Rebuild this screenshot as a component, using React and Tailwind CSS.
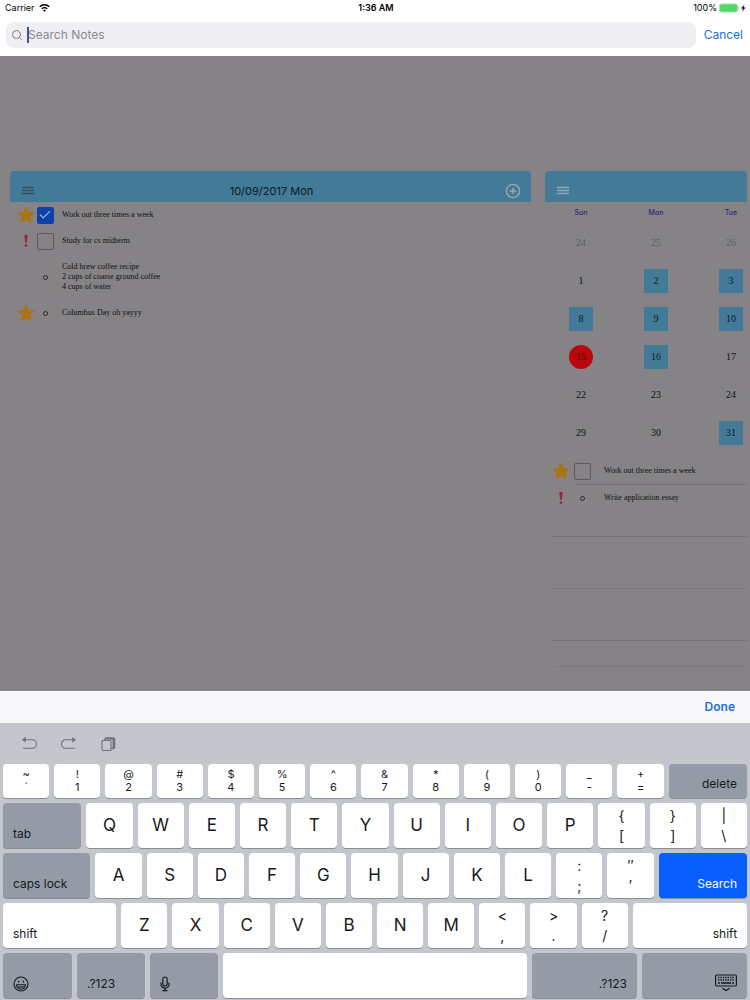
import React, { useState } from "react";
import { Search, CirclePlus, Check } from "lucide-react";

const numberRow = [
  ["~", "`"], ["!", "1"], ["@", "2"], ["#", "3"], ["$", "4"], ["%", "5"], ["^", "6"],
  ["&", "7"], ["*", "8"], ["(", "9"], [")", "0"], ["_", "-"], ["+", "="],
];

const calendarDays = [
  [{ day: 24, type: "muted" }, { day: 25, type: "muted" }, { day: 26, type: "muted" }],
  [{ day: 1 }, { day: 2, type: "marked" }, { day: 3, type: "marked" }],
  [{ day: 8, type: "marked" }, { day: 9, type: "marked" }, { day: 10, type: "marked" }],
  [{ day: 15, type: "today" }, { day: 16, type: "marked" }, { day: 17 }],
  [{ day: 22 }, { day: 23 }, { day: 24 }],
  [{ day: 29 }, { day: 30 }, { day: 31, type: "marked" }],
];

const dayStyles = {
  muted: "text-[#5f5d60]",
  marked: "bg-[#437a98] text-[#0b1c28]",
  today: "bg-[#b9080b] text-[#5c0508] rounded-full",
};

function WifiIcon() {
  return (
    <svg viewBox="0 0 22 16" className="w-[11px] h-2" fill="none" stroke="#000" strokeWidth="3">
      <path d="M1.500 5.500a13.500 13.500 0 0 1 19 0" />
      <path d="M5.500 9.500a8 8 0 0 1 11 0" />
      <path d="M11 15.500l-3-3a4.300 4.300 0 0 1 6 0z" fill="#000" stroke="none" />
    </svg>
  );
}

function MenuIcon() {
  return (
    <svg viewBox="0 0 12 9" className="w-3 h-[9px]" stroke="currentColor" strokeWidth="1.400">
      <path d="M0 1.500h12M0 4.500h12M0 7.500h12" />
    </svg>
  );
}

function Star() {
  return (
    <svg viewBox="0 0 18 18" className="w-[18px] h-[18px]">
      <path
        d="M9 1.500l2.200 5 5.400.6-4 3.700 1.100 5.400L9 13.500l-4.700 2.700 1.100-5.400-4-3.700 5.400-.6z"
        fill="#a8741c"
        stroke="#a8741c"
        strokeWidth="1.500"
        strokeLinejoin="round"
      />
    </svg>
  );
}

function Exclamation() {
  return (
    <svg viewBox="0 0 18 18" className="w-[18px] h-[18px]">
      <path d="M7.300 3.200q1.700-.8 3.400 0l-.9 7.600H8.200z" fill="#9a2140" />
      <circle cx="9" cy="13.600" r="1.400" fill="#9a2140" />
    </svg>
  );
}

function NoteMark({ mark, label, initial }) {
  const [checked, setChecked] = useState(initial);

  if (mark === "bullet") {
    return <span className="w-[5px] h-[5px] rounded-full border border-[#29272a]"></span>;
  }
  return (
    <label className="grid place-items-center">
      <input
        type="checkbox"
        aria-label={label}
        checked={checked}
        onChange={() => setChecked(!checked)}
        className="appearance-none col-start-1 row-start-1 w-[17px] h-[17px] rounded-xs border border-[#5d5b5e] checked:bg-[#0b41ab] checked:border-[#0b41ab]"
      />
      {checked && (
        <Check className="col-start-1 row-start-1 w-3.5 h-3.5 text-[#a3b1cc] pointer-events-none" strokeWidth={2} />
      )}
    </label>
  );
}

function Note({ flag, mark, checked = false, wide = false, lines }) {
  return (
    <li className="flex items-center min-h-[26px]">
      <span className="w-[18px] shrink-0">
        {flag === "star" && <Star />}
        {flag === "alert" && <Exclamation />}
      </span>
      <span className={`${wide ? "w-6 mr-2.5" : "w-5 mr-[7px]"} shrink-0 flex justify-center`}>
        <NoteMark mark={mark} label={lines[0]} initial={checked} />
      </span>
      <p className="font-['Liberation_Serif',serif] text-[8px] leading-[10px] text-[#111012]">
        {lines.map((line) => (
          <span key={line} className="block">{line}</span>
        ))}
      </p>
    </li>
  );
}

function Key({ className, children, ...rest }) {
  return (
    <button
      type="button"
      className={`${className} min-w-0 rounded-[4px] shadow-[0_1px_0_#8b8e93]`}
      {...rest}
    >
      {children}
    </button>
  );
}

function LetterKey({ letter }) {
  return (
    <Key className="flex-[46] bg-white text-[17px] leading-5 pb-0.5">{letter}</Key>
  );
}

function DoubleKey({ top, bottom, small = false }) {
  return (
    <Key className="flex-[46] bg-white">
      <span className={`flex flex-col items-center ${small ? "text-[11px] leading-[13px]" : "text-[14px] leading-5"}`}>
        <span>{top}</span>
        <span>{bottom}</span>
      </span>
    </Key>
  );
}

// label of the wide keys, sits near the bottom edge
function KeyLabel({ right = false, children }) {
  return (
    <span className={`h-full flex items-end px-2.5 pb-1.5 text-[12px] leading-4 ${right ? "justify-end" : ""}`}>
      {children}
    </span>
  );
}

function Keyboard() {
  return (
    <section aria-label="Keyboard" className="bg-[#c3c7cd] px-[3px] pb-[2px] text-[#17191c]">
      <div className="h-[41px] flex items-center gap-6 pl-[18px] text-[#6f7276]">
        <button type="button" aria-label="Undo">
          <svg viewBox="0 0 16 16" className="w-4 h-4" fill="none" stroke="currentColor" strokeWidth="1.1">
            <path d="M3 3.7h8.2a4.3 4.3 0 0 1 0 8.6H2" />
            <path d="M4.8 1v5.4L.8 3.7z" fill="currentColor" stroke="none" />
          </svg>
        </button>
        <button type="button" aria-label="Redo">
          <svg viewBox="0 0 16 16" className="w-4 h-4" fill="none" stroke="currentColor" strokeWidth="1.1">
            <path d="M13 3.7H4.8a4.3 4.3 0 0 0 0 8.6H14" />
            <path d="M11.2 1v5.4l4-2.7z" fill="currentColor" stroke="none" />
          </svg>
        </button>
        <button type="button" aria-label="Paste">
          <svg viewBox="0 0 16 16" className="w-4 h-4" fill="none" stroke="currentColor" strokeWidth="1.1">
            <rect x="1" y="4.5" width="9" height="10" rx="1" />
            <path d="M4 4V3q0-1 1-1H12.500q1 0 1 1v8.500q0 1-1 1h-2M4 2.800h8.300v9" strokeWidth="1.500" />
          </svg>
        </button>
      </div>
      <div className="flex flex-col gap-[5px]">
        <div className="flex gap-[5px] h-[34px]">
          {numberRow.map(([top, bottom]) => (
            <DoubleKey key={bottom} top={top} bottom={bottom} small />
          ))}
          <Key className="flex-[78] bg-[#949ba6]"><KeyLabel right>delete</KeyLabel></Key>
        </div>
        <div className="flex gap-[5px] h-[45px]">
          <Key className="flex-[78] bg-[#949ba6]"><KeyLabel>tab</KeyLabel></Key>
          {"QWERTYUIOP".split("").map((letter) => (
            <LetterKey key={letter} letter={letter} />
          ))}
          <DoubleKey top="{" bottom="[" />
          <DoubleKey top="}" bottom="]" />
          <DoubleKey top="|" bottom="\" />
        </div>
        <div className="flex gap-[5px] h-[45px]">
          <Key className="flex-[87] bg-[#949ba6]"><KeyLabel>caps lock</KeyLabel></Key>
          {"ASDFGHJKL".split("").map((letter) => (
            <LetterKey key={letter} letter={letter} />
          ))}
          <DoubleKey top=":" bottom=";" />
          <DoubleKey top="″" bottom="′" />
          <Key className="flex-[88] bg-[#085eff] text-white"><KeyLabel right>Search</KeyLabel></Key>
        </div>
        <div className="flex gap-[5px] h-[45px]">
          <Key className="flex-[113] bg-white"><KeyLabel>shift</KeyLabel></Key>
          {"ZXCVBNM".split("").map((letter) => (
            <LetterKey key={letter} letter={letter} />
          ))}
          <DoubleKey top="<" bottom="," />
          <DoubleKey top=">" bottom="." />
          <DoubleKey top="?" bottom="/" />
          <Key className="flex-[114] bg-white"><KeyLabel right>shift</KeyLabel></Key>
        </div>
        <div className="flex gap-[5px] h-[45px]">
          <Key className="flex-[69] bg-[#949ba6]" aria-label="Emoji">
            <KeyLabel>
              <svg viewBox="0 0 16 16" className="w-4 h-4" fill="none" stroke="currentColor" strokeWidth="1.1">
                <circle cx="8" cy="8" r="7" />
                <path d="M3.600 8.800h8.800a4.400 4.400 0 0 1-8.800 0z" />
                <path d="M4.200 11h7.600" />
                <ellipse cx="5.700" cy="5.600" rx=".7" ry="1.100" fill="currentColor" stroke="none" />
                <ellipse cx="10.300" cy="5.600" rx=".7" ry="1.100" fill="currentColor" stroke="none" />
              </svg>
            </KeyLabel>
          </Key>
          <Key className="flex-[68] bg-[#949ba6]"><KeyLabel>.?123</KeyLabel></Key>
          <Key className="flex-[68] bg-[#949ba6]" aria-label="Dictate">
            <KeyLabel>
              <svg viewBox="0 0 10 16" className="w-2.5 h-4" fill="none" stroke="currentColor" strokeWidth="1.200">
                <rect x="2.800" y="1" width="4.400" height="9" rx="2.200" />
                <path d="M1 6.500v1.700a4 4 0 0 0 8 0V6.500M5 12.200v2.300M2.500 14.600h5" />
              </svg>
            </KeyLabel>
          </Key>
          <Key className="flex-[304] bg-white" aria-label="Space" />
          <Key className="flex-[105] bg-[#949ba6]"><KeyLabel right>.?123</KeyLabel></Key>
          <Key className="flex-[105] bg-[#949ba6]" aria-label="Hide keyboard">
            <KeyLabel right>
              <svg viewBox="0 0 22 18" className="w-[22px] h-[18px]" fill="none" stroke="currentColor">
                <rect x=".6" y="1" width="20.800" height="11" rx="1.200" strokeWidth="1.200" />
                <path d="M3 3.500h16M3 6h16" strokeWidth="1.500" strokeDasharray="1.400 1" />
                <path d="M3 9h2M6 9h10M17 9h2" strokeWidth="1.500" />
                <path d="M7.500 14.200l3.500 2.300 3.500-2.300" strokeWidth="1.200" />
              </svg>
            </KeyLabel>
          </Key>
        </div>
      </div>
    </section>
  );
}

function App() {
  const [query, setQuery] = useState("");

  return (
    <div className="min-h-screen flex flex-col bg-[#858386] font-[Inter,sans-serif]">
      <header className="bg-white h-14">
        <div className="h-4 pl-[5px] pr-[3px] grid grid-cols-3 items-center text-[9px] leading-3 text-black">
          <div className="flex items-center gap-1">
            Carrier <WifiIcon />
          </div>
          <div className="text-center font-semibold">1:36 AM</div>
          <div className="flex items-center justify-end gap-[2px]">
            100%
            <svg viewBox="0 0 28 10" className="w-7 h-2.5">
              <rect x=".5" y="1" width="18" height="8" rx="2" fill="#4cd964" stroke="#a6dcae" />
              <path d="M19.500 3.500q1.500 1.500 0 3z" fill="#8f9391" />
              <path d="M25.500 1.500L22 5.600h2L23 8.800l3.500-4.200h-2z" fill="#000" />
            </svg>
          </div>
        </div>
        <div className="flex items-center gap-2 pl-1.5 pr-[7px] pt-1.5">
          <div className="flex-1 h-[26px] flex items-center gap-1 pl-[5px] rounded-lg bg-[#efeef2]">
            <Search className="w-3 h-3 text-[#808085]" strokeWidth={2} />
            <span className="w-0.5 h-4 bg-[#3b50b8]"></span>
            <input
              type="text"
              aria-label="Search Notes"
              placeholder="Search Notes"
              value={query}
              onChange={(e) => setQuery(e.target.value)}
              className="flex-1 -ml-[5px] text-[12px] leading-4 outline-none placeholder:text-[#8a8a90]"
            />
          </div>
          <button type="button" className="text-[12px] leading-4 text-[#1a6fe0]">Cancel</button>
        </div>
      </header>

      <main className="flex-1 flex gap-3.5 pt-[115px] pl-2.5 pr-[3px]">
        <section className="flex-1 min-w-0">
          <div className="h-[31px] rounded-t-[4px] bg-[#437a98] pl-3 pr-2.5 pt-2 grid grid-cols-3 items-center">
            <button type="button" aria-label="Menu" className="text-[#34505e]">
              <MenuIcon />
            </button>
            <h1 className="text-center text-[11px] leading-4 text-[#0d1a22]">10/09/2017 Mon</h1>
            <button type="button" aria-label="Add note" className="justify-self-end text-[#93abb8]">
              <CirclePlus className="w-4 h-4" strokeWidth={2} />
            </button>
          </div>
          <ul className="pl-[7px]">
            <Note flag="star" mark="box" checked lines={["Work out three times a week"]} />
            <Note flag="alert" mark="box" lines={["Study for cs midterm"]} />
            <li className="py-2">
              <ul>
                <Note mark="bullet" lines={["Cold brew coffee recipe", "2 cups of coarse ground coffee", "4 cups of water"]} />
              </ul>
            </li>
            <Note flag="star" mark="bullet" lines={["Columbus Day oh yayyy"]} />
          </ul>
        </section>

        <section className="w-[202px] shrink-0">
          <div className="h-[31px] rounded-t-[4px] bg-[#437a98] px-3 pt-2 flex items-center">
            <button type="button" aria-label="Calendar menu" className="text-[#93abb8]">
              <MenuIcon />
            </button>
          </div>
          <div className="pl-6 pr-1">
            <div className="h-[22px] flex items-center justify-between text-[7px] leading-3 font-medium text-[#2c2680]">
              <span className="w-6 text-center">Sun</span>
              <span className="w-6 text-center">Mon</span>
              <span className="w-6 text-center">Tue</span>
            </div>
            {calendarDays.map((week) => (
              <div key={week[1].day} className="h-[38px] flex items-center justify-between font-['Liberation_Serif',serif] text-[10px] leading-3">
                {week.map(({ day, type }) => (
                  <button key={day} type="button" className={`w-6 h-6 ${dayStyles[type] || "text-[#111012]"}`}>
                    {day}
                  </button>
                ))}
              </div>
            ))}
          </div>
          <ul className="pl-[7px] pt-1.5">
            <Note flag="star" mark="box" wide lines={["Work out three times a week"]} />
            <li className="ml-6 border-t border-[#767477]"></li>
            <Note flag="alert" mark="bullet" wide lines={["Write application essay"]} />
            <li className="h-[26px] border-b border-[#767477]"></li>
            <li className="h-[52px] border-b border-[#7a787b]"></li>
            <li className="h-[52px] border-b border-[#767477]"></li>
            <li className="ml-1 h-[26px] border-b border-[#7a787b]"></li>
          </ul>
        </section>
      </main>

      <div className="h-8 bg-[#f8f8fa] flex items-center justify-end px-[15px]">
        <button type="button" className="text-[12px] leading-4 font-semibold text-[#1a6fe0]">Done</button>
      </div>
      <Keyboard />
    </div>
  );
}

export default App;
